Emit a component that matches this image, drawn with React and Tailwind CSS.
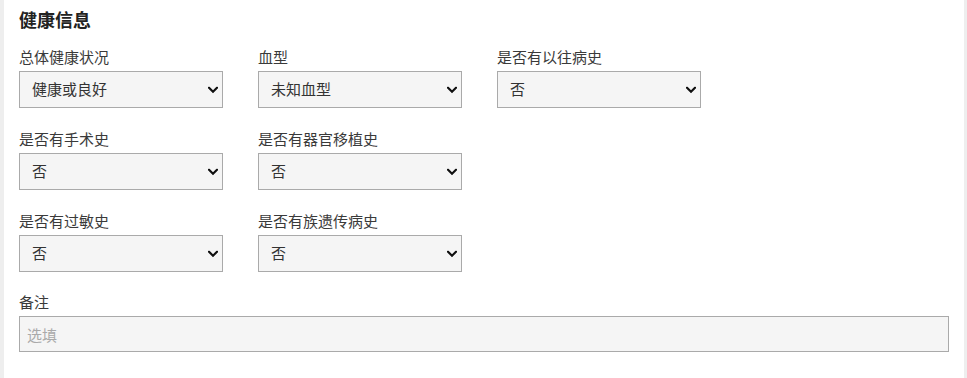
import React from 'react';

const fields = [
  { label: '总体健康状况', value: '健康或良好', options: ['健康或良好', '一般', '较差'] },
  { label: '血型', value: '未知血型', options: ['未知血型', 'A型', 'B型', 'AB型', 'O型'] },
  { label: '是否有以往病史', value: '否', options: ['否', '是'] },
  { label: '是否有手术史', value: '否', options: ['否', '是'] },
  { label: '是否有器官移植史', value: '否', options: ['否', '是'] },
  null,
  { label: '是否有过敏史', value: '否', options: ['否', '是'] },
  { label: '是否有族遗传病史', value: '否', options: ['否', '是'] },
];

function Chevron() {
  return (
    <svg
      className="pointer-events-none absolute right-[5px] top-1/2 -translate-y-1/2"
      width="10"
      height="7"
      viewBox="0 0 10 7"
      fill="none"
    >
      <path d="M1 1.2 L5 5.2 L9 1.2" stroke="#111" strokeWidth="2.2" strokeLinecap="square" />
    </svg>
  );
}

function SelectField({ label, value, options }) {
  return (
    <div className="flex flex-col">
      <label className="text-[15px] leading-[20px] text-[#3a3a3a] mb-[4px]">{label}</label>
      <div className="relative w-[204px]">
        <select
          defaultValue={value}
          className="appearance-none w-full h-[37px] bg-[#f5f5f5] border border-[#aaa] pl-[12px] pr-[24px] text-[15px] text-[#333] outline-none"
        >
          {options.map((o) => (
            <option key={o} value={o}>{o}</option>
          ))}
        </select>
        <Chevron />
      </div>
    </div>
  );
}

export default function App() {
  return (
    <div
      className="min-h-[378px] bg-[#eeeeee] pl-[4px] pr-[3px]"
      style={{ fontFamily: '"Noto Sans CJK SC", "Noto Sans", sans-serif' }}
    >
      <div className="min-h-[378px] bg-white px-[15px] pt-[7px]">
        <h2 className="text-[18px] leading-[24px] font-bold text-[#222] mb-[16px]">健康信息</h2>

        <div className="grid grid-cols-[204px_204px_204px] gap-x-[35px] gap-y-[21px]">
          {fields.map((f, i) =>
            f ? <SelectField key={i} {...f} /> : <div key={i} />
          )}
        </div>

        {/* 备注 */}
        <div className="mt-[20px] flex flex-col">
          <label className="text-[15px] leading-[20px] text-[#3a3a3a] mb-[4px]">备注</label>
          <input
            type="text"
            placeholder="选填"
            className="w-full h-[36px] bg-[#f5f5f5] border border-[#aaa] px-[7px] text-[15px] text-[#333] placeholder:text-[#aaa] outline-none"
          />
        </div>
      </div>
    </div>
  );
}
